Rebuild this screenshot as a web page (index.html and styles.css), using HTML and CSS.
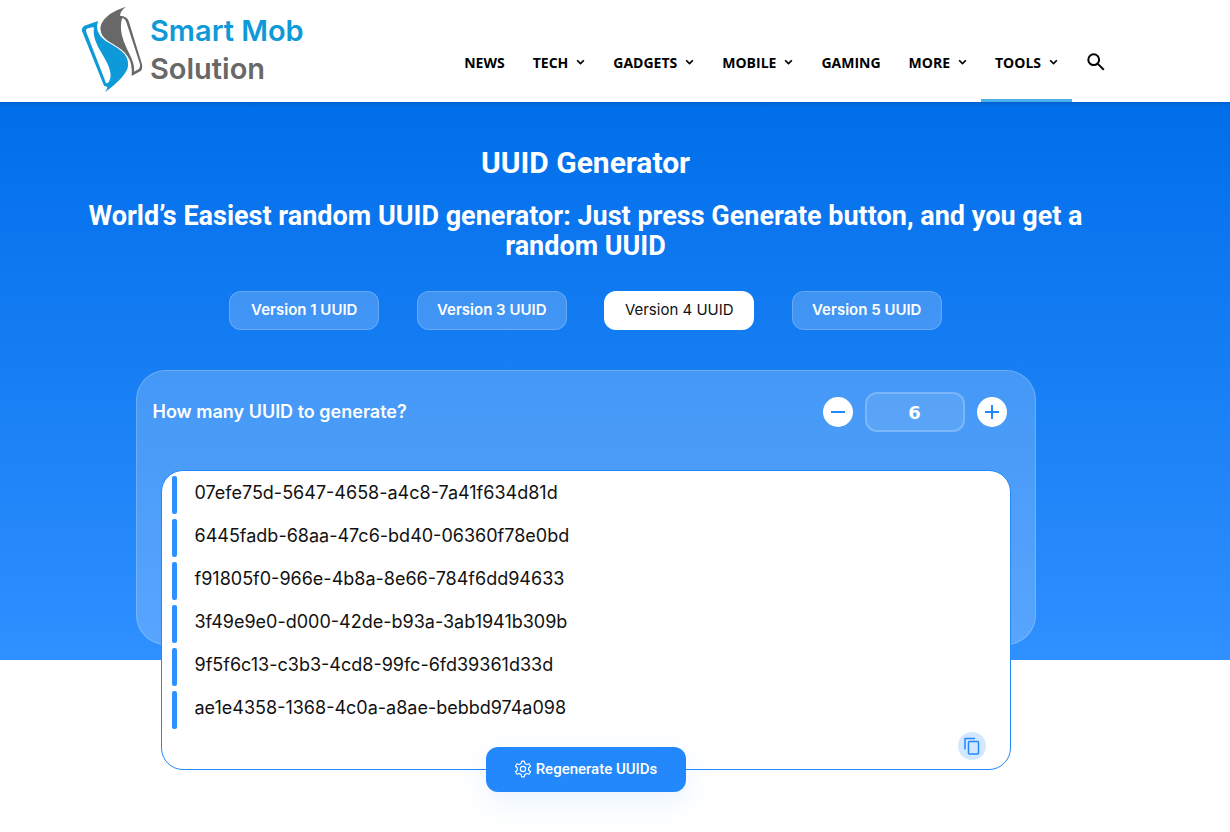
FILE: index.html
```html
<!DOCTYPE html>
<html lang="en">
<head>
    <meta charset="UTF-8">
    <meta name="viewport" content="width=device-width, initial-scale=1.0">
    <title>UUID Generator - Smart Mob Solution</title>
    <link rel="stylesheet" href="styles.css">
</head>
<body>
    <header class="header">
        <a class="logo" href="#">
            <svg class="logo-mark" viewBox="30 12 195 264" aria-hidden="true">
                <path fill="#0e9ad8" fill-rule="evenodd" d="M36 90 Q34 76 50 72 L84 60 Q72 92 104 118 C150 145 178 160 174 196 Q170 225 105 274 Q112 264 112 258 L102 254 Z M54 82 Q46 84 49 94 L108 246 Q118 250 122 225 C124 180 62 130 72 80 Q72 76 54 82 Z"/>
                <path fill="#686868" fill-rule="evenodd" d="M168 17 C110 35 88 65 92 88 C96 125 150 130 172 165 Q188 185 185 225 L212 210 Q218 205 216 190 L176 60 Q172 46 150 44 Q150 30 168 17 Z M156 52 Q165 52 169 64 L210 190 Q211 202 205 205 L192 212 C200 170 138 120 156 52 Z"/>
            </svg>
            <span class="logo-text">Smart Mob<span class="logo-sub">Solution</span></span>
        </a>
        <nav class="nav">
            <a href="#">NEWS</a>
            <a href="#">TECH <svg class="chevron" viewBox="0 0 8 6"><path d="M1 1l3 3 3-3"/></svg></a>
            <a href="#">GADGETS <svg class="chevron" viewBox="0 0 8 6"><path d="M1 1l3 3 3-3"/></svg></a>
            <a href="#">MOBILE <svg class="chevron" viewBox="0 0 8 6"><path d="M1 1l3 3 3-3"/></svg></a>
            <a href="#">GAMING</a>
            <a href="#">MORE <svg class="chevron" viewBox="0 0 8 6"><path d="M1 1l3 3 3-3"/></svg></a>
            <a class="active" href="#">TOOLS <svg class="chevron" viewBox="0 0 8 6"><path d="M1 1l3 3 3-3"/></svg></a>
            <button class="search" type="button" aria-label="Search">
                <svg viewBox="0 0 18 18"><circle cx="6.7" cy="6.7" r="5.4"/><path d="M10.6 10.6l6.2 6.2"/></svg>
            </button>
        </nav>
    </header>

    <main class="hero">
        <h1>UUID Generator</h1>
        <h2>World’s Easiest random UUID generator: Just press Generate button, and you get a random UUID</h2>

        <div class="versions">
            <button type="button">Version 1 UUID</button>
            <button type="button">Version 3 UUID</button>
            <button type="button" class="selected">Version 4 UUID</button>
            <button type="button">Version 5 UUID</button>
        </div>

        <section class="card">
            <div class="amount">
                <label for="count">How many UUID to generate?</label>
                <div class="stepper">
                    <button type="button" class="round" aria-label="Less"><svg viewBox="0 0 14 14"><path d="M0 7h14"/></svg></button>
                    <input type="text" id="count" value="6">
                    <button type="button" class="round" aria-label="More"><svg viewBox="0 0 14 14"><path d="M0 7h14M7 0v14"/></svg></button>
                </div>
            </div>

            <div class="results">
                <ul class="uuids">
                    <li>07efe75d-5647-4658-a4c8-7a41f634d81d</li>
                    <li>6445fadb-68aa-47c6-bd40-06360f78e0bd</li>
                    <li>f91805f0-966e-4b8a-8e66-784f6dd94633</li>
                    <li>3f49e9e0-d000-42de-b93a-3ab1941b309b</li>
                    <li>9f5f6c13-c3b3-4cd8-99fc-6fd39361d33d</li>
                    <li>ae1e4358-1368-4c0a-a8ae-bebbd974a098</li>
                </ul>
                <button type="button" class="copy" aria-label="Copy">
                    <svg viewBox="0 0 16 18"><path d="M1 12.5V1.5h10"/><rect x="4.5" y="4.5" width="10" height="12.5" rx="1"/></svg>
                </button>
                <button type="button" class="regenerate">
                    <svg viewBox="0 0 24 24"><path d="M10.3 1.5h3.4l.8 3.3 2.3 1.3 3.3-1 1.9 3.2-2.5 2.4v2.6l2.5 2.4-1.9 3.2-3.3-1-2.3 1.3-.8 3.3h-3.4l-.8-3.3-2.3-1.3-3.3 1L2 15.7l2.5-2.4v-2.6L2 8.3l1.9-3.2 3.3 1 2.3-1.3z"/><circle cx="12" cy="12" r="3.5"/></svg>
                    Regenerate UUIDs
                </button>
            </div>
        </section>
    </main>
</body>
</html>
```
FILE: styles.css
```css
* {
    box-sizing: border-box;
}
body {
    margin: 0;
    min-height: 100vh;
    background-color: #fff;
    font-family: Inter, sans-serif;
}
button {
    border: none;
    padding: 0;
    font-family: inherit;
    cursor: pointer;
}
svg {
    display: block;
    fill: none;
    stroke-linejoin: round;
}
.header {
    position: relative;
    display: flex;
    justify-content: space-between;
    height: 102px;
    padding: 0 125px 0 80px;
    box-shadow: 0 1px 4px rgba(0, 0, 0, 0.2);
}
.logo {
    display: flex;
    align-items: center;
    gap: 5px;
    height: 98px;
    text-decoration: none;
}
.logo-mark {
    width: 65px;
    height: 88px;
}
.logo-text {
    padding-top: 2px;
    font-size: 29px;
    font-weight: 600;
    line-height: 38px;
    color: #0e9ad8;
}
.logo-sub {
    display: block;
    color: #686868;
}
.nav {
    display: flex;
}
.nav a {
    display: flex;
    align-items: center;
    gap: 8px;
    padding: 26px 14px 0;
    border-bottom: 3px solid transparent;
    font-family: "Open Sans", sans-serif;
    font-size: 14px;
    font-weight: 700;
    color: #000;
    text-decoration: none;
}
.nav .active {
    border-bottom-color: #4db2ec;
}
.chevron {
    width: 9px;
    height: 7px;
    stroke: #000;
    stroke-width: 1.5;
}
.search {
    margin-left: 15px;
    padding-top: 22px;
    background: none;
}
.search svg {
    width: 18px;
    height: 18px;
    stroke: #000;
    stroke-width: 2;
}
.hero {
    padding: 46px 59px 15px 0;
    background: linear-gradient(#006eea, #2f90ff);
    color: #fff;
}
h1, h2 {
    margin: 0 auto;
    font-family: Roboto, sans-serif;
    font-weight: 700;
    line-height: 30px;
    text-align: center;
}
h1 {
    font-size: 30px;
}
h2 {
    max-width: 1068px;
    margin-top: 23px;
    font-size: 27px;
}
.versions {
    display: grid;
    grid-template-columns: repeat(4, 1fr);
    justify-items: center;
    max-width: 750px;
    margin: 30px auto 40px;
}
.versions button {
    width: 150px;
    height: 39px;
    padding-bottom: 2px;
    border: 1px solid rgba(255, 255, 255, 0.2);
    border-radius: 12px;
    background-color: rgba(255, 255, 255, 0.2);
    font-size: 15px;
    font-weight: 600;
    color: #fff;
}
.versions .selected {
    background-color: #fff;
    font-weight: 400;
    color: #111;
}
.card {
    max-width: 900px;
    margin: 0 auto;
    border: 1px solid rgba(255, 255, 255, 0.2);
    border-radius: 30px;
    background-color: rgba(255, 255, 255, 0.2);
}
.amount {
    display: flex;
    justify-content: space-between;
    align-items: center;
    padding: 21px 28px 0 16px;
    font-size: 18px;
    font-weight: 600;
}
.amount label {
    padding-bottom: 2px;
}
.stepper {
    display: flex;
    align-items: center;
    gap: 12px;
}
.stepper input {
    width: 100px;
    height: 40px;
    border: 2px solid rgba(255, 255, 255, 0.2);
    border-radius: 12px;
    background-color: rgba(255, 255, 255, 0.1);
    font-family: "DejaVu Sans", sans-serif;
    font-size: 18px;
    font-weight: 700;
    color: #fff;
    text-align: center;
}
.round {
    display: grid;
    place-items: center;
    width: 30px;
    height: 30px;
    border-radius: 50%;
    background-color: #fff;
}
.round svg {
    width: 14px;
    height: 14px;
    stroke: #2388fb;
    stroke-width: 2;
}
.results {
    position: relative;
    margin: 38px 24px -126px;
    padding: 5px 10px 9px;
    border: 1px solid #2388fb;
    border-radius: 22px;
    background-color: #fff;
    color: #111;
}
.uuids {
    display: grid;
    gap: 5px;
    margin: 0;
    padding: 0;
    list-style: none;
}
.uuids li {
    display: flex;
    align-items: center;
    gap: 18px;
    height: 38px;
    font-size: 18px;
    padding-bottom: 6px;
}
.uuids li::before {
    content: "";
    flex: none;
    width: 5px;
    height: 38px;
    margin-bottom: -6px;
    border-radius: 2px;
    background-color: #2f90ff;
}
.copy {
    display: grid;
    place-items: center;
    width: 28px;
    height: 28px;
    margin: 3px 14px 0 auto;
    border-radius: 50%;
    background-color: #d3e7ff;
}
.copy svg {
    width: 16px;
    height: 18px;
    stroke: #2388fb;
    stroke-width: 1.5;
}
.regenerate {
    position: absolute;
    bottom: -23px;
    left: calc(50% - 100px);
    display: flex;
    justify-content: center;
    align-items: center;
    gap: 4px;
    width: 200px;
    height: 45px;
    padding-bottom: 2px;
    border-radius: 12px;
    background-color: #2388fb;
    box-shadow: 0 10px 30px rgba(35, 136, 251, 0.1);
    font-family: Roboto, sans-serif;
    font-size: 15px;
    font-weight: 500;
    color: #fff;
}
.regenerate svg {
    width: 18px;
    height: 18px;
    stroke: #fff;
    stroke-width: 1.5;
}
```
